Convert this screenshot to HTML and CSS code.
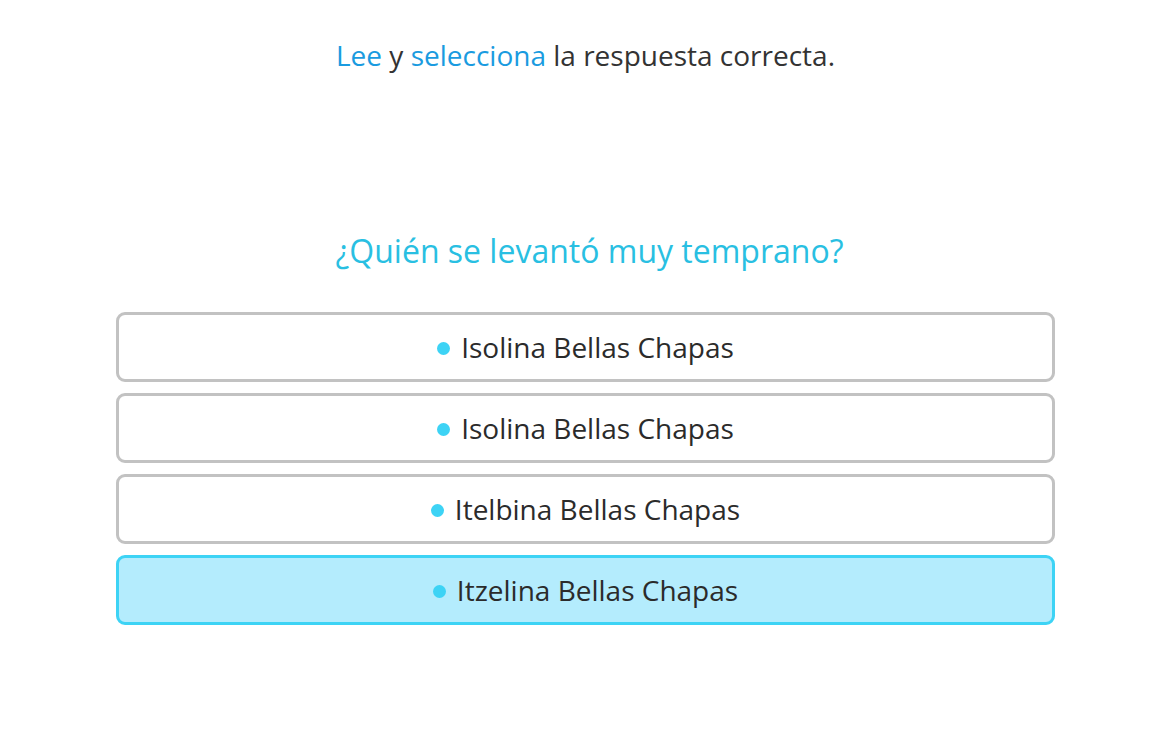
FILE: index.html
```html
<!DOCTYPE html>
<html lang="es">
<head>
<meta charset="utf-8">
<link rel="stylesheet" href="styles.css">
</head>
<body>
<main class="page">
  <p class="instruction"><span class="hl">Lee</span> y <span class="hl">selecciona</span> la respuesta correcta.</p>
  <h1 class="question">¿Quién se levantó muy temprano?</h1>
  <div class="options">
    <div class="option"><span class="dot"></span>Isolina Bellas Chapas</div>
    <div class="option"><span class="dot"></span>Isolina Bellas Chapas</div>
    <div class="option"><span class="dot"></span>Itelbina Bellas Chapas</div>
    <div class="option selected"><span class="dot"></span>Itzelina Bellas Chapas</div>
  </div>
</main>
</body>
</html>
```
FILE: styles.css
```css
html, body {
  margin: 0;
  padding: 0;
  background: #ffffff;
}
body {
  font-family: "Open Sans", "Noto Sans", sans-serif;
  color: #333333;
}
.page {
  width: 939px;
  margin-left: 116px;
  display: flex;
  flex-direction: column;
  align-items: center;
}
.instruction {
  margin: 35px 0 0;
  font-size: 28px;
  line-height: 40px;
  color: #333333;
}
.hl {
  color: #1a9be0;
}
.question {
  margin: 153px 0 0;
  padding-left: 8px;
  font-weight: 400;
  font-size: 32px;
  line-height: 46px;
  color: #29bfe2;
}
.options {
  align-self: stretch;
  margin-top: 38px;
  display: flex;
  flex-direction: column;
  gap: 11px;
}
.option {
  height: 70px;
  box-sizing: border-box;
  border: 3px solid #c2c2c2;
  border-radius: 9px;
  background: #ffffff;
  display: flex;
  align-items: center;
  justify-content: center;
  font-size: 28px;
  color: #2b2b2b;
}
.option.selected {
  background: #b4ecfd;
  border-color: #3dd3f5;
}
.dot {
  width: 13px;
  height: 13px;
  border-radius: 50%;
  background: #3dd3f5;
  margin-right: 11px;
  margin-top: 2px;
}
```
